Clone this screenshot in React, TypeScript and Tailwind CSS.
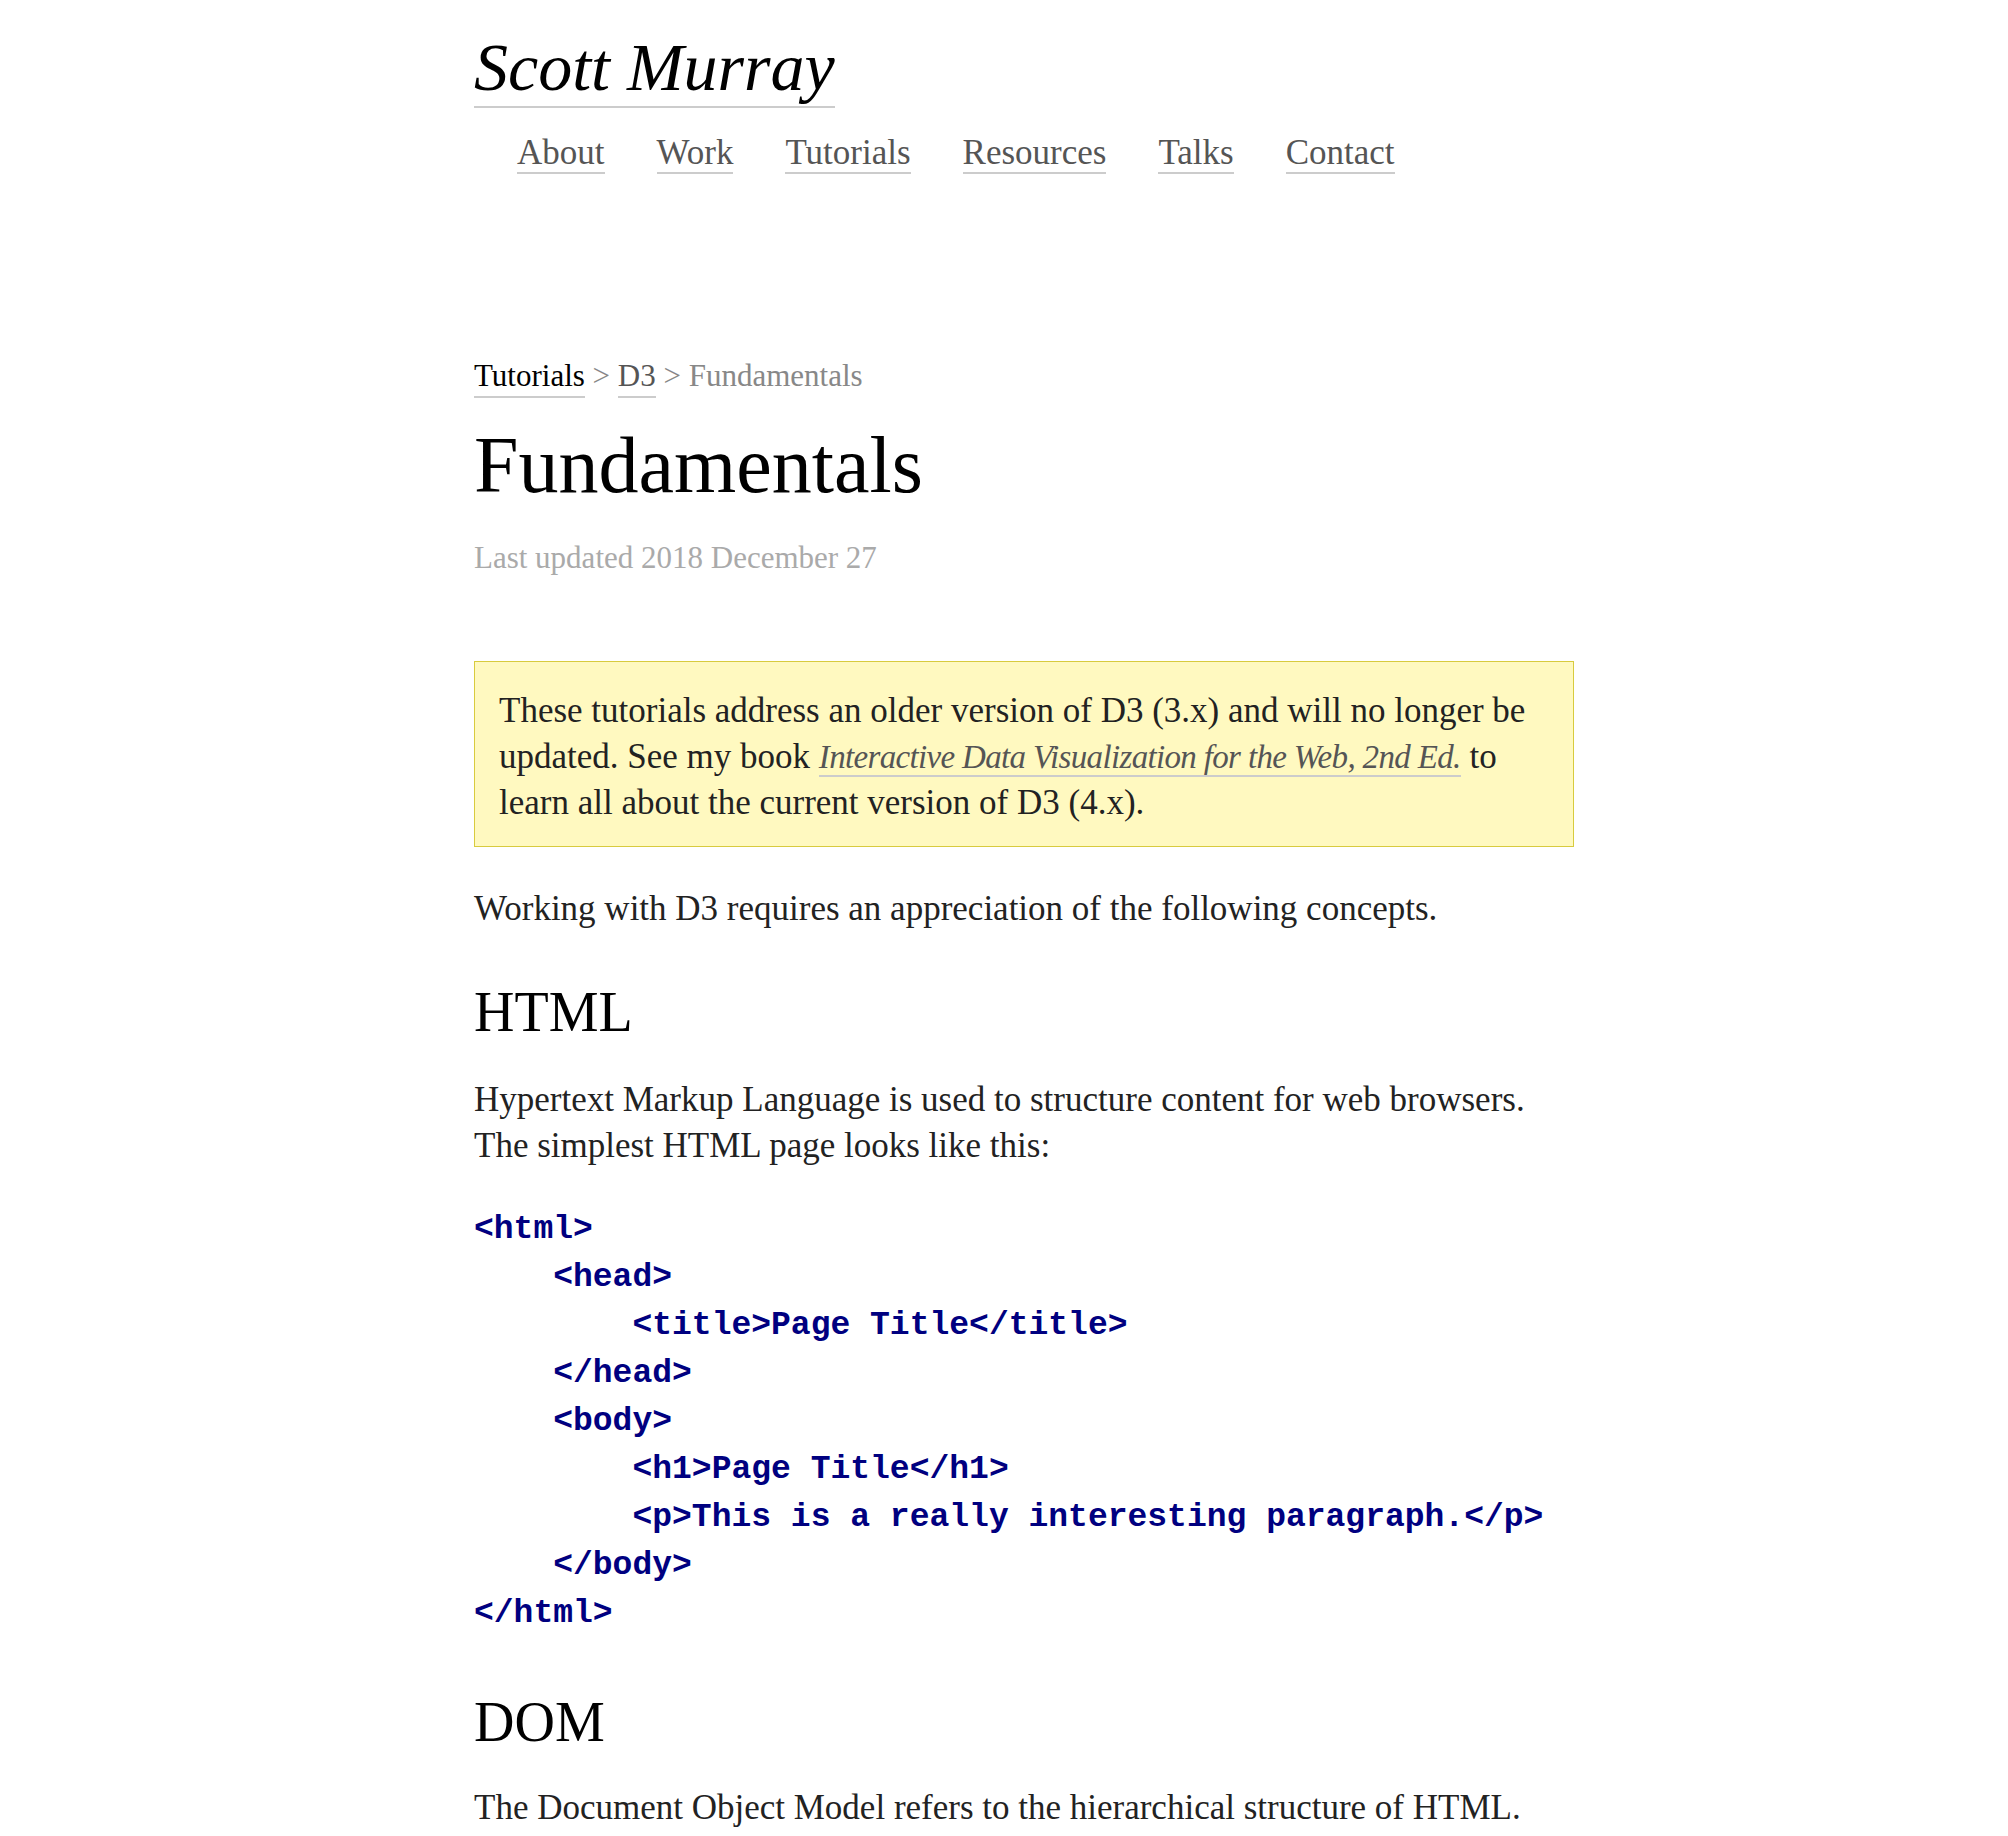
import React from 'react';

const navItems = ['About', 'Work', 'Tutorials', 'Resources', 'Talks', 'Contact'];

const codeSample = `<html>
    <head>
        <title>Page Title</title>
    </head>
    <body>
        <h1>Page Title</h1>
        <p>This is a really interesting paragraph.</p>
    </body>
</html>`;

const serif = 'font-["Liberation_Serif",_"Times_New_Roman",_serif]';

const App: React.FC = () => {
  return (
    <div className={`min-h-screen bg-white text-[#222] ${serif}`}>
      <div className="mx-auto w-[1140px] pl-[40px] pb-10">
        {/* header */}
        <header className="pt-[28px]">
          <div className="flex">
            <a className="block text-[68px] leading-[78px] italic text-black border-b-2 border-[#ccc]">
              Scott Murray
            </a>
          </div>
          <nav className="mt-[26px] flex gap-[52px] pl-[43px]">
            {navItems.map((item) => (
              <a
                key={item}
                className="block text-[35px] leading-[38px] text-[#555] border-b-2 border-[#ccc]"
              >
                {item}
              </a>
            ))}
          </nav>
        </header>

        <main>
          {/* breadcrumb */}
          <div className="mt-[182px] flex items-start text-[31px] leading-[40px] text-[#888]">
            <a className="block text-black border-b-2 border-[#ccc]">Tutorials</a>
            <span className="whitespace-pre"> &gt; </span>
            <a className="block text-[#555] border-b-2 border-[#ccc]">D3</a>
            <span className="whitespace-pre"> &gt; Fundamentals</span>
          </div>

          <h1 className="mt-[22px] text-[80px] leading-[90px] text-black font-normal">Fundamentals</h1>
          <p className="mt-[28px] text-[31px] leading-[40px] text-[#aaa]">Last updated 2018 December 27</p>

          {/* notice */}
          <div className="mt-[83px] border border-[#d8cb3e] bg-[#fff9c0] px-[24px] pt-[26px] pb-[20px]">
            <p className="text-[35px] leading-[46px] text-[#222]">
              These tutorials address an older version of D3 (3.x) and will no longer be updated. See my book{' '}
              <a className="italic text-[33px] leading-[40px] tracking-[-0.02em] text-[#555] border-b-2 border-[#ccc]">
                Interactive Data Visualization for the Web, 2nd Ed.
              </a>{' '}
              to learn all about the current version of D3 (4.x).
            </p>
          </div>

          <p className="mt-[39px] text-[35px] leading-[46px]">
            Working with D3 requires an appreciation of the following concepts.
          </p>

          <h2 className="mt-[48px] text-[56px] leading-[64px] text-black font-normal">HTML</h2>
          <p className="mt-[33px] text-[35px] leading-[46px]">
            Hypertext Markup Language is used to structure content for web browsers. The simplest HTML page looks
            like this:
          </p>

          <pre className='mt-[37px] font-["Liberation_Mono",_"Courier_New",_monospace] font-bold text-[33px] leading-[48px] text-[#000080]'>
            {codeSample}
          </pre>

          <h2 className="mt-[52px] text-[56px] leading-[64px] text-black font-normal">DOM</h2>
          <p className="mt-[31px] text-[35px] leading-[46px]">
            The Document Object Model refers to the hierarchical structure of HTML.
          </p>
        </main>
      </div>
    </div>
  );
};

export default App;
